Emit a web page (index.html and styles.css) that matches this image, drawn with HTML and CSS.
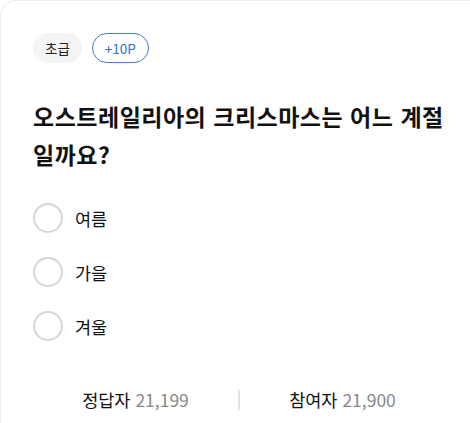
FILE: index.html
```html
<!DOCTYPE html>
<html lang="ko">
<head>
  <meta charset="UTF-8" />
  <title>퀴즈</title>
  <meta name="viewport" content="width=device-width, initial-scale=1.0" />
  <link rel="stylesheet" href="styles.css">
</head>
<body>

<div class="quiz-card">
  <div class="tag-row">
    <span class="tag tag-level">초급</span>
    <span class="tag tag-point">+10P</span>
  </div>

  <h1 class="question">오스트레일리아의 크리스마스는 어느 계절일까요?</h1>

  <ul class="choice-list">
    <li class="choice"><span class="radio"></span>여름</li>
    <li class="choice"><span class="radio"></span>가을</li>
    <li class="choice"><span class="radio"></span>겨울</li>
  </ul>

  <div class="stats">
    <div class="stat">정답자 <span class="stat-num">21,199</span></div>
    <div class="stat-divider"></div>
    <div class="stat">참여자 <span class="stat-num">21,900</span></div>
  </div>
</div>

</body>
</html>
```

FILE: styles.css
```css
html {
  overflow: hidden;
}

body {
  font-family: 'Noto Sans CJK KR', 'Noto Sans', sans-serif;
  margin: 0;
  background: #fff;
  color: #111;
}

.quiz-card {
  width: 470px;
  height: 423px;
  box-sizing: border-box;
  border: 1px solid #eee;
  border-right: none;
  border-bottom: none;
  border-top-left-radius: 16px;
  padding: 32px 25px 0 32px;
}

.tag-row {
  display: flex;
  gap: 10px;
}

.tag {
  display: inline-flex;
  align-items: center;
  justify-content: center;
  height: 30px;
  padding: 0 12px;
  border-radius: 15px;
  font-size: 13.5px;
  box-sizing: border-box;
}

.tag-level {
  background: #f4f4f4;
  color: #222;
}

.tag-point {
  border: 1px solid #3d7bd9;
  color: #2f6fd3;
}

.question {
  font-size: 23px;
  font-weight: 700;
  line-height: 38px;
  margin: 34px 0 0;
  letter-spacing: 0.5px;
}

.choice-list {
  list-style: none;
  margin: 30px 0 0;
  padding: 0;
}

.choice {
  display: flex;
  align-items: center;
  gap: 12px;
  font-size: 17.5px;
  height: 30px;
  margin-bottom: 24px;
}

.radio {
  width: 30px;
  height: 30px;
  box-sizing: border-box;
  border: 2px solid #d6d6d6;
  border-radius: 50%;
}

.stats {
  display: flex;
  align-items: center;
  margin-top: 46px;
}

.stat {
  flex: 1;
  text-align: center;
  font-size: 17.5px;
  color: #111;
}

.stat-num {
  color: #888;
}

.stat-divider {
  width: 2px;
  height: 20px;
  background: #e2e2e2;
}
```
